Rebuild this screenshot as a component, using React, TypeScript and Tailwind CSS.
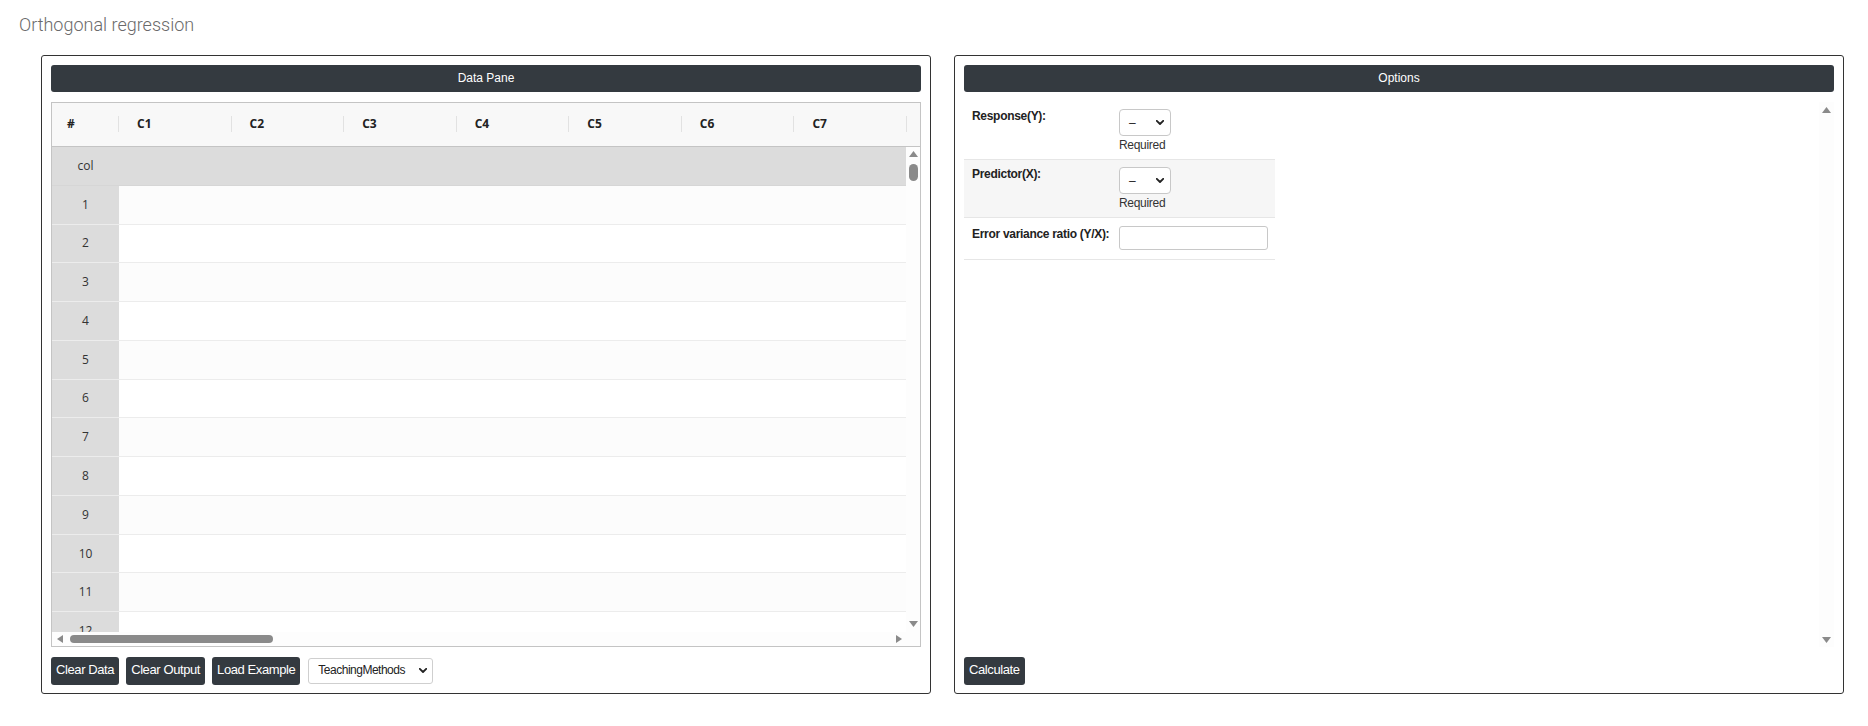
import React from "react";

const COLS = ["C1", "C2", "C3", "C4", "C5", "C6", "C7"];
const ROWS = ["col", "1", "2", "3", "4", "5", "6", "7", "8", "9", "10", "11", "12"];

const sans = { fontFamily: '"Liberation Sans", Arial, sans-serif' };
const openSans = { fontFamily: '"Open Sans", "Liberation Sans", sans-serif' };

function Tri({ dir, className = "" }: { dir: "up" | "down" | "left" | "right"; className?: string }) {
  const pts: Record<string, string> = {
    up: "0,6 4.5,0 9,6",
    down: "0,0 9,0 4.5,6",
    left: "6,0 6,8 0,4",
    right: "0,0 0,8 6,4",
  };
  const horiz = dir === "left" || dir === "right";
  return (
    <svg
      width={horiz ? 6 : 9}
      height={horiz ? 8 : 6}
      viewBox={horiz ? "0 0 6 8" : "0 0 9 6"}
      className={className}
    >
      <polygon points={pts[dir]} fill="#8a8a8a" />
    </svg>
  );
}

function Chevron({ className = "" }: { className?: string }) {
  return (
    <svg width="8" height="5" viewBox="0 0 8 5" className={className}>
      <path d="M0.8 0.8 L4 4 L7.2 0.8" fill="none" stroke="#222" strokeWidth="1.8" strokeLinecap="round" strokeLinejoin="round" />
    </svg>
  );
}

function DarkButton({ children }: { children: React.ReactNode }) {
  return (
    <button
      className="h-[28px] px-[5px] pb-[3px] rounded-[3px] bg-[#343a40] text-white text-[13px] tracking-[-0.4px] leading-none"
      style={sans}
    >
      {children}
    </button>
  );
}

function PaneHeader({ title }: { title: string }) {
  return (
    <div
      className="h-[27px] pb-[1px] rounded-[3px] bg-[#343a40] text-white text-[12px] flex items-center justify-center"
      style={sans}
    >
      {title}
    </div>
  );
}

function DataGrid() {
  return (
    <div className="h-[545px] border border-[#c4c4c4] flex flex-col bg-white" style={openSans}>
      {/* column header strip */}
      <div className="h-[44px] pb-[2px] shrink-0 flex bg-[#f8f8f8] border-b border-[#c4c4c4] text-[12px] font-bold text-[#222]">
        <div className="w-[66px] shrink-0 flex items-center pl-[15px]">#</div>
        <div className="w-[788px] shrink-0 grid grid-cols-7">
          {COLS.map((c) => (
            <div key={c} className="flex items-center">
              <div className="w-px h-[16px] bg-[#e2e2e2]" />
              <span className="ml-[18px]">{c}</span>
            </div>
          ))}
        </div>
        <div className="flex-1 flex items-center">
          <div className="w-px h-[16px] bg-[#e2e2e2]" />
        </div>
      </div>

      {/* body with scrollbars */}
      <div className="flex-1 flex flex-col min-h-0">
        <div className="flex h-[485px]">
          <div className="w-[854px] shrink-0 overflow-hidden">
            {ROWS.map((r, i) => (
              <div
                key={r}
                className={
                  "h-[38.78px] flex border-b " +
                  (i === 0
                    ? "bg-[#dcdcdc] border-[#d6d6d6]"
                    : i % 2 === 1
                    ? "bg-[#fcfcfc] border-[#ececec]"
                    : "bg-white border-[#ececec]")
                }
              >
                <div className="w-[67px] shrink-0 bg-[#dcdcdc] flex items-center justify-center text-[12px] text-[#333]">
                  {r}
                </div>
                <div className="flex-1" />
              </div>
            ))}
          </div>
          <div className="flex-1 flex flex-col items-center pt-[4px] pb-[5px] bg-[#fdfdfd]">
            <Tri dir="up" />
            <div className="mt-[7px] w-[9px] h-[17px] rounded-full bg-[#8a8a8a]" />
            <div className="flex-1" />
            <Tri dir="down" />
          </div>
        </div>
        <div className="flex-1 flex">
          <div className="w-[854px] shrink-0 flex items-center pl-[5px] pr-[4px] bg-[#fdfdfd]">
            <Tri dir="left" />
            <div className="ml-[7px] w-[203px] h-[8px] rounded-full bg-[#8a8a8a]" />
            <div className="flex-1" />
            <Tri dir="right" />
          </div>
          <div className="flex-1 bg-[#fdfdfd]" />
        </div>
      </div>
    </div>
  );
}

function DataPane() {
  return (
    <div className="w-[890px] h-[639px] border border-[#333] rounded-[3px] px-[9px] pt-[9px] pb-[8px] flex flex-col">
      <PaneHeader title="Data Pane" />
      <div className="mt-[10px]">
        <DataGrid />
      </div>
      <div className="mt-[10px] flex items-center gap-[7px]">
        <DarkButton>Clear Data</DarkButton>
        <DarkButton>Clear Output</DarkButton>
        <DarkButton>Load Example</DarkButton>
        <div
          className="ml-[1px] h-[26px] w-[125px] border border-[#cfcfcf] rounded-[3px] bg-white flex items-center pl-[9px] pr-[5px] pb-[2px] text-[12px] tracking-[-0.5px] text-[#222]"
          style={sans}
        >
          <span className="flex-1">TeachingMethods</span>
          <Chevron />
        </div>
      </div>
    </div>
  );
}

function SmallSelect() {
  return (
    <div className="h-[27px] w-[52px] border border-[#c8c8c8] rounded-[4px] bg-white flex items-center pl-[9px] pr-[6px] text-[12px] text-[#222]">
      <span className="flex-1 leading-none">–</span>
      <Chevron />
    </div>
  );
}

function OptionsPane() {
  return (
    <div className="w-[890px] h-[639px] border border-[#333] rounded-[3px] px-[9px] pt-[9px] pb-[8px] flex flex-col">
      <PaneHeader title="Options" />
      <div className="mt-[10px] h-[545px] flex" style={sans}>
        <div className="w-[311px] text-[12px] text-[#222]">
          <div className="flex border-b border-[#e6e6e6] pt-[7px] pb-[6px]">
            <div className="w-[155px] pl-[8px] font-bold tracking-[-0.3px] leading-[14px]">Response(Y):</div>
            <div>
              <SmallSelect />
              <div className="mt-[2px] leading-[15px] tracking-[-0.3px] text-[#333]">Required</div>
            </div>
          </div>
          <div className="flex bg-[#f6f6f6] border-b border-[#e6e6e6] pt-[7px] pb-[6px]">
            <div className="w-[155px] pl-[8px] font-bold tracking-[-0.3px] leading-[14px]">Predictor(X):</div>
            <div>
              <SmallSelect />
              <div className="mt-[2px] leading-[15px] tracking-[-0.3px] text-[#333]">Required</div>
            </div>
          </div>
          <div className="flex border-b border-[#e6e6e6] pt-[8px] pb-[9px]">
            <div className="w-[155px] pl-[8px] font-bold tracking-[-0.3px] leading-[14px] pt-[1px]">Error variance ratio (Y/X):</div>
            <div className="h-[24px] w-[149px] border border-[#c8c8c8] rounded-[3px] bg-white" />
          </div>
        </div>
        <div className="flex-1" />
        <div className="w-[15px] flex flex-col items-center pt-[5px] pb-[4px] bg-[#fdfdfd]">
          <Tri dir="up" />
          <div className="flex-1" />
          <Tri dir="down" />
        </div>
      </div>
      <div className="mt-[10px] flex">
        <DarkButton>Calculate</DarkButton>
      </div>
    </div>
  );
}

export default function App() {
  return (
    <div className="w-[1868px] h-[726px] bg-white overflow-hidden">
      <div
        className="pl-[19px] pt-[14px] text-[18px] leading-[22px] font-light text-[#6a6a6a]"
        style={{ fontFamily: 'Roboto, "Liberation Sans", sans-serif' }}
      >
        Orthogonal regression
      </div>
      <div className="mt-[19px] pl-[41px] flex gap-[23px]">
        <DataPane />
        <OptionsPane />
      </div>
    </div>
  );
}
